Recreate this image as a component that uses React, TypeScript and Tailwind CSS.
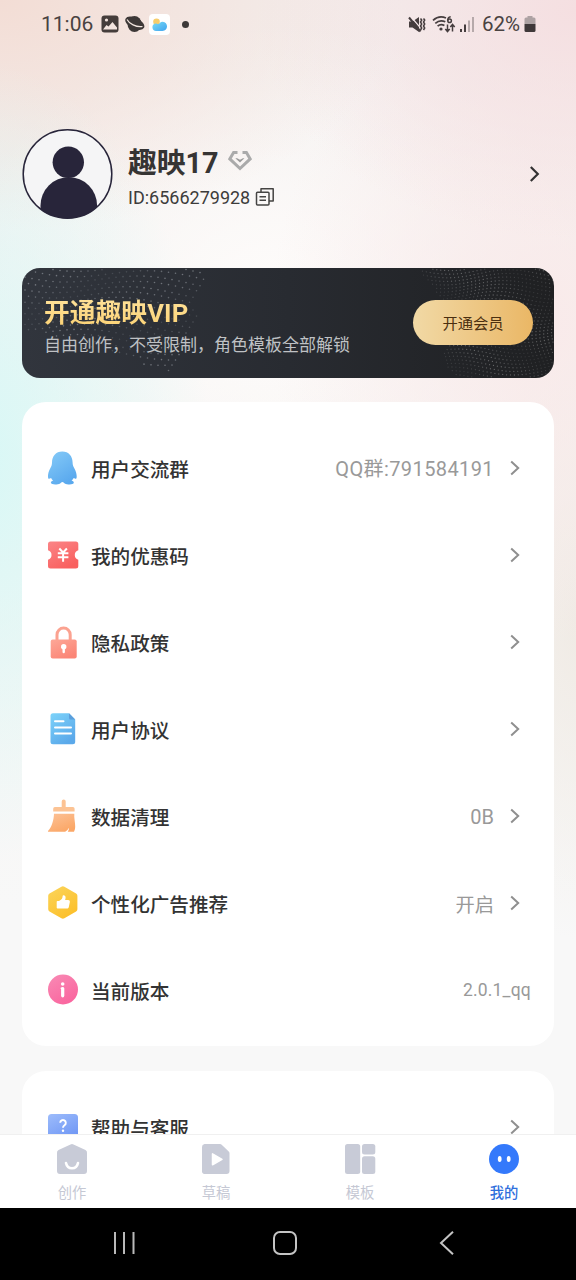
import type { ReactNode } from 'react';

type Row = {
  label: string;
  icon: ReactNode;
  value?: string;
  valueClass?: string;
  arrow?: boolean;
};

type Dot = { x: number; y: number; o: number };

// Loose wavy dots on the left side of the VIP banner
const leftDots: Dot[] = [];
for (let r = 0; r < 20; r++) {
  for (let c = 0; c < 27; c++) {
    const x = 3 + c * 7 + (r % 2) * 3.5;
    const y = -4 + r * 5.6 + Math.sin(c / 4 + r / 5) * 5 + c * 0.35;
    const edge = 184 - r * 1.5 + Math.sin(r) * 4;
    if (y < 1 || y > 108 || x > edge) continue;
    if (y > 62 && x < (y - 62) * 3.2 + 10) continue;
    if (y > 70 && x > 180 - (y - 70)) continue;
    leftDots.push({ x, y, o: 0.3 + 0.14 * Math.sin(c / 3 + r / 2) });
  }
}

// Tighter swirls on the right side
const rightDots: Dot[] = [];
for (let r = 0; r < 34; r++) {
  for (let c = 0; c < 38; c++) {
    const x = 398 + c * 3.9 + Math.sin(r / 4) * 5;
    const y = -5 + r * 3.6 + Math.sin(c / 5 + r / 9) * 4;
    if (y < 1 || y > 109 || x > 531) continue;
    if (y < 60 && x < 396 + y * 0.75) continue;
    if (y >= 60 && x < 427 + Math.sin(y / 8) * 5) continue;
    rightDots.push({ x, y, o: 0.26 + 0.12 * Math.sin(c / 4 - r / 3) });
  }
}

function Gradient({ id, from, to }: { id: string; from: string; to: string }) {
  return (
    <defs>
      <linearGradient id={id} x1="0" y1="0" x2="0.6" y2="1">
        <stop offset="0" stopColor={from} />
        <stop offset="1" stopColor={to} />
      </linearGradient>
    </defs>
  );
}

function RowIcon({ children }: { children: ReactNode }) {
  return (
    <svg width="32" height="36" viewBox="0 0 32 36" fill="none" className="shrink-0">
      {children}
    </svg>
  );
}

const PenguinIcon = (
  <RowIcon>
    <Gradient id="penguin" from="#86cbf8" to="#5aa9ee" />
    <path
      d="M15.300 .5C8.800 .5 5 5.400 5 11.500c0 2.400-.5 3.500-1.700 5.800C1.600 20.500 .8 23.500 1 26c.1 1.700.8 2.200 1.700 1.600.7-.5 1.300-.5 1.800 0 .4 1.100.9 1.300 1.600 2-1.600.6-2.400 1.500-2.200 2.500.4 1.700 6.300 2 9.200.4.900-.6 1.300-1.400 2.300-1.400s1.400.8 2.300 1.400c2.900 1.600 8.800 1.300 9.100-.4.2-1-.6-1.900-2.200-2.500.7-.7 1.200-.9 1.600-2 .5-.5 1-.5 1.700 0 .9.6 1.700.1 1.800-1.600.1-2.500-.7-5.500-2.400-8.700-1.200-2.300-1.700-3.400-1.700-5.800C25.600 5.400 21.800 .5 15.300 .5Z"
      fill="url(#penguin)"
    />
  </RowIcon>
);

const CouponIcon = (
  <RowIcon>
    <Gradient id="coupon" from="#fb8587" to="#f9605f" />
    <path
      d="M3.500 3.500h25.300a2.500 2.500 0 0 1 2.500 2.500v6.300a4.900 4.900 0 0 0 0 9.400V28a2.500 2.500 0 0 1-2.500 2.500H3.500A2.500 2.500 0 0 1 1 28v-6.300a4.900 4.900 0 0 0 0-9.400V6a2.500 2.500 0 0 1 2.500-2.500Z"
      fill="url(#coupon)"
    />
    <path d="M12.300 10.500l3.800 4 3.800-4M10.800 15.200h10.600M10.800 19.200h10.600M16.100 14.500v9.300" stroke="#fff" strokeWidth="2" />
  </RowIcon>
);

const LockIcon = (
  <RowIcon>
    <Gradient id="lock" from="#fda898" to="#fb8576" />
    <path d="M10 16V9.700a6.600 6.600 0 0 1 13.200 0V16" stroke="#fba290" strokeWidth="3" />
    <rect x="3.700" y="14.500" width="26" height="19" rx="2" fill="url(#lock)" />
    <circle cx="16.700" cy="21.700" r="2.700" fill="#fff" />
    <rect x="15.500" y="22" width="2.400" height="6.200" rx="1.200" fill="#fff" />
  </RowIcon>
);

const DocIcon = (
  <RowIcon>
    <Gradient id="doc" from="#7cd3fa" to="#5ba9ea" />
    <path d="M6 1.200h16l6.200 6.300v22.200a2.500 2.500 0 0 1-2.500 2.500H6a2.500 2.500 0 0 1-2.500-2.500v-26A2.500 2.500 0 0 1 6 1.200Z" fill="url(#doc)" />
    <path d="M22 1.200l6.200 6.300h-4.700A1.500 1.500 0 0 1 22 6Z" fill="#5b9fdc" />
    <path d="M8 9.300h8.500M8 15.500h16M8 21.500h16" stroke="#fff" strokeWidth="2" strokeLinecap="round" />
  </RowIcon>
);

const BroomIcon = (
  <RowIcon>
    <Gradient id="broom" from="#fcc297" to="#fba767" />
    <path d="M14.700 2.500a2 2 0 0 1 4 0V8h7.200a1.700 1.700 0 0 1 1.700 1.700v2.800H6.200V9.700A1.700 1.700 0 0 1 7.900 8h6.800Z" fill="#fcc394" />
    <path
      d="M7 14.800h20.300c-.4 4 .9 8.600 .9 12.500 0 2.600-.5 4-1.200 5.500h-6.200c.8-1.300 1.200-2.600 1.300-4-1.200 1.900-2.400 3.200-4 4H1.500c-.6 0-.7-.6-.3-1C4.800 28 6.700 21.500 7 14.800Z"
      fill="url(#broom)"
    />
  </RowIcon>
);

const HexIcon = (
  <RowIcon>
    <Gradient id="hex" from="#fbd55b" to="#fcc02c" />
    <path d="M14.400 .8a3 3 0 0 1 3 0l11.700 6.800a2.600 2.600 0 0 1 1.300 2.300v13.400a2.600 2.600 0 0 1-1.300 2.200l-11.700 6.800a3 3 0 0 1-3 0L2.500 25.500a2.600 2.600 0 0 1-1.300-2.200V9.900a2.600 2.600 0 0 1 1.300-2.300Z" fill="url(#hex)" />
    <path d="M10.500 15h2v7.500h-2a.8.8 0 0 1-.8-.8v-5.900a.8.8 0 0 1 .8-.8ZM12.300 14.800c2.700-1.200 3.200-2.700 3.300-4.500.1-1.700 2.900-1.200 3 1 0 1-.2 1.800-.5 2.700h3c1.300 0 2 .9 1.700 2.200l-1 4.700c-.3 1-.9 1.600-1.900 1.600h-7.600Z" fill="#fff" />
  </RowIcon>
);

const InfoIcon = (
  <RowIcon>
    <Gradient id="info" from="#f88bb5" to="#fa669f" />
    <circle cx="16" cy="16.500" r="15" fill="url(#info)" />
    <circle cx="15.700" cy="11" r="1.800" fill="#fff" />
    <path d="M14.300 15.300h1.400v7" stroke="#fff" strokeWidth="1.600" strokeLinecap="round" />
    <path d="M15.700 15.500v7.300" stroke="#fff" strokeWidth="3.200" strokeLinecap="round" />
  </RowIcon>
);

const HelpIcon = (
  <RowIcon>
    <Gradient id="help" from="#9dbcfb" to="#7198f5" />
    <rect x="1" y="4" width="30" height="26" rx="3.500" fill="url(#help)" />
    <path d="M13.200 12.800a2.800 2.800 0 1 1 4.300 2.400c-1 .7-1.500 1.100-1.500 2.600" stroke="#fff" strokeWidth="1.900" />
    <circle cx="16" cy="20.700" r="1.200" fill="#fff" />
  </RowIcon>
);

const rows: Row[] = [
  { label: '用户交流群', icon: PenguinIcon, value: 'QQ群:791584191', valueClass: 'pt-px text-[20px] tracking-[0.4px]', arrow: true },
  { label: '我的优惠码', icon: CouponIcon, arrow: true },
  { label: '隐私政策', icon: LockIcon, arrow: true },
  { label: '用户协议', icon: DocIcon, arrow: true },
  { label: '数据清理', icon: BroomIcon, value: '0B', valueClass: 'text-[20px]', arrow: true },
  { label: '个性化广告推荐', icon: HexIcon, value: '开启', valueClass: 'pt-[5px] text-[19.300px]', arrow: true },
  { label: '当前版本', icon: InfoIcon, value: '2.0.1_qq', valueClass: 'text-[17.500px] tracking-[0.2px]' },
];

function StatusBar() {
  return (
    <div className="flex h-12 shrink-0 items-center justify-between pl-[41px] pr-10 text-[#494241]">
      <div className="flex items-center">
        <span className="w-[60px] text-[21px] leading-none">11:06</span>
        <svg width="18" height="18" viewBox="0 0 18 18">
          <rect x=".5" y=".5" width="17" height="17" rx="3" fill="#453d3b" />
          <circle cx="5.500" cy="5" r="1.600" fill="#f3e4de" />
          <path d="M2 14.500l3.500-4.500 2 1.500 4-4.500 2 2.500 2.500 3v2Z" fill="#f3e4de" />
        </svg>
        <svg width="22" height="18" viewBox="0 0 22 18" className="ml-[5px]">
          <ellipse cx="10.500" cy="9" rx="7" ry="8" fill="#3d3837" />
          <ellipse cx="10.800" cy="8.300" rx="10.300" ry="5.500" transform="rotate(26 10.800 8.300)" fill="#3d3837" />
          <path d="M3 4.500C5 8.500 12 12.500 18.500 11.500" stroke="#f1e5df" strokeWidth="1.200" fill="none" />
        </svg>
        <span className="ml-[3px] flex size-[21px] items-center justify-center rounded bg-white">
          <svg width="17" height="15" viewBox="0 0 17 15">
            <defs>
              <linearGradient id="cloud" x1="0" y1="0" x2="1" y2="1">
                <stop offset="0" stopColor="#7bdcf5" />
                <stop offset="1" stopColor="#3fa4ef" />
              </linearGradient>
            </defs>
            <circle cx="5.500" cy="4.800" r="3.300" fill="#f7cd6b" />
            <path d="M5 14a3.800 3.800 0 0 1-.6-7.500c1.400-.2 2 1 3 .5 1.300-.7 1.800-2.300 4.300-2.300 5.600 0 6 9.300-.4 9.300Z" fill="url(#cloud)" />
          </svg>
        </span>
        <span className="ml-3 size-[7px] rounded-full bg-[#3d3938]" />
      </div>
      <div className="flex items-center">
        <svg width="18" height="17" viewBox="0 0 18 17">
          <path d="M1 5.500h3.500L11 1v15l-6.500-4.500H1Z" fill="#453d3e" />
          <path d="M2.500 .2l11 13" stroke="#f8e9ea" strokeWidth="1.300" />
          <path d="M1 1.500l11.500 14" stroke="#453d3e" strokeWidth="2" />
          <path d="M12.500 2.500l1.200 1.600-1.200 1.900 1.200 2-1.200 2 1.200 2-1.200 2M15.500 2.500l1.200 1.600-1.200 1.900 1.200 2-1.200 2 1.200 2-1.200 2" stroke="#453d3e" strokeWidth="1.500" fill="none" />
        </svg>
        <svg width="24" height="18" viewBox="0 0 24 18" className="ml-[6px]" fill="none" stroke="#453d3e">
          <path d="M1 5.300C5 1.700 10 1.200 14 3M3.300 8.300c3-2.700 6.500-3.200 10-1.500M5.600 11.200c2-1.800 4.500-2 6.800-.7" strokeWidth="1.700" />
          <circle cx="9" cy="14" r="1.600" fill="#453d3e" stroke="none" />
          <path d="M18.700 1.700c-2.200.3-3.100 2-3 4" strokeWidth="1.500" />
          <circle cx="17.600" cy="5.800" r="1.800" strokeWidth="1.500" />
          <path d="M15.500 9.500v6.500M13.300 14l2.200 2.500 2.200-2.500M20.500 16.500V10M18.300 12l2.200-2.500 2.200 2.500" strokeWidth="1.500" />
        </svg>
        <svg width="16" height="17" viewBox="0 0 16 17" className="ml-[3px]">
          <rect x="1" y="13" width="2" height="3" fill="#453d3e" />
          <rect x="5" y="8.500" width="2" height="7.500" fill="#453d3e" />
          <rect x="9" y="4.500" width="2" height="11.500" fill="#b6a9aa" />
          <rect x="13" y="1" width="2" height="15" fill="#b6a9aa" />
        </svg>
        <span className="ml-[7px] text-[20.500px] leading-none">62%</span>
        <svg width="12" height="18" viewBox="0 0 12 18" className="ml-1">
          <path d="M3.500 1h5v1.500H10A1.500 1.500 0 0 1 11.500 4v5H.5V4A1.500 1.500 0 0 1 2 2.500h1.500Z" fill="#ada2a3" />
          <path d="M.5 9h11v6.500A1.500 1.500 0 0 1 10 17H2a1.500 1.500 0 0 1-1.500-1.500Z" fill="#3f3839" />
        </svg>
      </div>
    </div>
  );
}

function Profile() {
  return (
    <div className="flex items-center pl-[22px] pr-8 pt-20">
      <svg width="91" height="92" viewBox="0 0 91 92" className="shrink-0">
        <clipPath id="avatar">
          <circle cx="45.500" cy="46" r="44.500" />
        </clipPath>
        <circle cx="45.500" cy="46" r="44.300" fill="#f5f5f6" />
        <g clipPath="url(#avatar)" fill="#28253a">
          <circle cx="46.300" cy="34.300" r="15.700" />
          <path d="M18.500 92V77.500a28.300 28.300 0 0 1 56.600 0V92Z" />
        </g>
        <circle cx="45.500" cy="46" r="44.300" fill="none" stroke="#28253a" strokeWidth="1.500" />
      </svg>
      <div className="ml-[15px] flex flex-1 flex-col pt-[7px]">
        <div className="flex items-center">
          <h1 className="text-[28.800px] font-bold leading-9 text-[#363433]">趣映17</h1>
          <svg width="26" height="22" viewBox="0 0 26 22" className="-mt-[5px] ml-2" fill="none">
            <path d="M10.500 2.500H6.600L2.800 8.900 13 18.500 23.200 8.900 19.400 2.500h-3.900" stroke="#aaa" strokeWidth="3" />
            <path d="M8.300 8.200h1.800L13 9.800l2.900-1.600h1.500L13 12.500Z" fill="#9b9b9b" />
          </svg>
        </div>
        <div className="flex items-center pt-[5px]">
          <span className="text-[18px] leading-6 text-[#3d3c3b]">ID:6566279928</span>
          <svg width="20" height="20" viewBox="0 0 20 20" className="-mt-[2px] ml-[5px]" fill="none" stroke="#454443" strokeWidth="1.500">
            <path d="M6 5V1.800h12.200V14H14" strokeLinejoin="round" />
            <rect x="1.500" y="5.300" width="12.500" height="12.700" rx="1" />
            <path d="M4.500 9.800h6.500M4.500 13.300h6.500" />
          </svg>
        </div>
      </div>
      <svg width="12" height="18" viewBox="0 0 12 18" fill="none" className="mr-[2px]">
        <path d="M.800 2l7 7-7 7" stroke="#333132" strokeWidth="2.200" />
      </svg>
    </div>
  );
}

function VipBanner() {
  return (
    <div className="relative mx-[22px] mt-12 flex h-[110px] shrink-0 items-center justify-between overflow-hidden rounded-[18px] bg-linear-to-r from-[#31353d] via-[#282b31] to-[#1f2022] pl-[22px] pr-[21px]">
      <svg className="absolute inset-0" width="532" height="110" viewBox="0 0 532 110">
        {leftDots.map((d, i) => (
          <circle key={i} cx={d.x} cy={d.y} r="0.8" fill="#c5cbd2" opacity={d.o} />
        ))}
        {rightDots.map((d, i) => (
          <circle key={i} cx={d.x} cy={d.y} r="0.65" fill="#d0d0d0" opacity={d.o} />
        ))}
      </svg>
      <div className="relative pt-2">
        <h2 className="bg-linear-to-b from-[#ffe39c] to-[#fbd070] bg-clip-text text-[25.700px] font-bold leading-9 tracking-[0.1px] text-transparent">
          开通趣映VIP
        </h2>
        <p className="text-[17px] leading-7 text-[#bfc1c4]">自由创作，不受限制，角色模板全部解锁</p>
      </div>
      <button className="relative mb-px h-[45px] w-[120px] rounded-full bg-linear-to-r from-[#f1d9a5] to-[#eab765] pt-[3px] text-[15.300px] text-[#4b2f10]">
        开通会员
      </button>
    </div>
  );
}

function MenuRow({ label, icon, value, valueClass, arrow }: Row) {
  return (
    <div className="flex h-[87px] items-center pl-[25px] pr-[23px]">
      {icon}
      <span className="ml-3 flex-1 pt-[5px] text-[19.600px] font-medium text-[#333]">{label}</span>
      {value && <span className={`text-[#999] ${valueClass}`}>{value}</span>}
      {arrow && (
        <svg width="11" height="16" viewBox="0 0 11 16" fill="none" className="mb-[2px] ml-[15px] mr-[11px] shrink-0">
          <path d="M2.200 1.500L9.200 8l-7 6.500" stroke="#8f8f8f" strokeWidth="2" />
        </svg>
      )}
    </div>
  );
}

function TabBar() {
  return (
    <div className="grid h-[74px] shrink-0 grid-cols-4 border-t border-[#f0f0f0] bg-white text-[14.300px] text-[#c5c8d4]">
      <div className="flex flex-col items-center pt-[7.500px]">
        <svg width="32" height="32" viewBox="0 0 32 32">
          <path d="M14.500 1.500a3 3 0 0 1 3 0l12 5.500A3 3 0 0 1 31 10v18a3 3 0 0 1-3 3H4a3 3 0 0 1-3-3V10a3 3 0 0 1 1.500-3Z" fill="#c8cbd7" />
          <path d="M10 20c1.500 7 10.500 7 12 0" stroke="#fff" strokeWidth="2.600" strokeLinecap="round" fill="none" />
        </svg>
        <span className="mt-2 leading-5">创作</span>
      </div>
      <div className="flex flex-col items-center pt-[7.500px]">
        <svg width="32" height="32" viewBox="0 0 32 32">
          <path d="M4.500 1H20q1 0 1.700.7l7 6.800q.8.8.8 1.800V28a3 3 0 0 1-3 3h-22A2.500 2.500 0 0 1 2 28V4a3 3 0 0 1 2.500-3Z" fill="#c8cbd7" />
          <path d="M12.500 10.800v11l9.500-5.500Z" fill="#fff" stroke="#fff" strokeWidth="1.500" strokeLinejoin="round" />
        </svg>
        <span className="mt-2 leading-5">草稿</span>
      </div>
      <div className="flex flex-col items-center pt-[7.500px]">
        <svg width="32" height="32" viewBox="0 0 32 32" fill="#c8cbd7">
          <rect x="1" y="1" width="15.200" height="30" rx="2.500" />
          <rect x="18" y="1" width="13.300" height="10.500" rx="2.500" />
          <rect x="18" y="13.300" width="13.300" height="17.700" rx="2.500" />
        </svg>
        <span className="mt-2 leading-5">模板</span>
      </div>
      <div className="flex flex-col items-center pt-[7.500px]">
        <svg width="32" height="32" viewBox="0 0 32 32">
          <circle cx="16" cy="16" r="15" fill="#3479fb" />
          <ellipse cx="11.700" cy="16" rx="1.900" ry="2.900" fill="#fff" />
          <ellipse cx="20.700" cy="16" rx="1.900" ry="2.900" fill="#fff" />
        </svg>
        <span className="mt-2 font-medium leading-5 text-[#2f6fdc]">我的</span>
      </div>
    </div>
  );
}

function SystemNav() {
  return (
    <div className="flex h-[72px] shrink-0 items-center bg-black pb-[2px] pl-[112px]">
      <svg width="24" height="24" viewBox="0 0 24 24" stroke="#b9b9b9" strokeWidth="2">
        <path d="M3 1v22M12 1v22M21.500 1v22" />
      </svg>
      <svg width="24" height="24" viewBox="0 0 24 24" fill="none" className="ml-[137px]">
        <rect x="1" y="1" width="22" height="22" rx="6" stroke="#c4c4c4" strokeWidth="2" />
      </svg>
      <svg width="16" height="24" viewBox="0 0 16 24" fill="none" className="ml-[142px]">
        <path d="M14 .8L2 12l12 11.200" stroke="#c4c4c4" strokeWidth="2" />
      </svg>
    </div>
  );
}

export default function App() {
  return (
    <div className="flex h-[1280px] w-[576px] flex-col overflow-hidden bg-[#f8f8f8] font-['Roboto','Noto_Sans_CJK_SC',sans-serif]">
      <div className="flex min-h-0 flex-1 flex-col overflow-hidden bg-[radial-gradient(ellipse_230px_400px_at_-20px_460px,#d8f8f6_0%,#d8f8f600_100%),radial-gradient(ellipse_400px_230px_at_0px_0px,#f3ddd5_0%,#f3ddd500_100%),radial-gradient(ellipse_320px_230px_at_576px_10px,#f5dfe1_0%,#f5dfe100_100%),radial-gradient(ellipse_270px_330px_at_540px_320px,#f9eaea_0%,#f9eaea00_100%),radial-gradient(ellipse_120px_320px_at_576px_620px,#f0ebe5_0%,#f0ebe500_100%),radial-gradient(ellipse_320px_280px_at_270px_300px,#fefcfb_0%,#fefcfb00_100%),linear-gradient(#f3efee,#f6f5f3_50%,#f8f8f8_80%)]">
        <StatusBar />
        <Profile />
        <VipBanner />
        <div className="mx-[22px] mt-6 shrink-0 rounded-3xl bg-white pb-3 pt-[23px]">
          {rows.map((row) => (
            <MenuRow key={row.label} {...row} />
          ))}
        </div>
        <div className="mx-[22px] mt-[25px] shrink-0 rounded-t-3xl bg-white pt-[13px]">
          <MenuRow label="帮助与客服" icon={HelpIcon} arrow />
        </div>
      </div>
      <TabBar />
      <SystemNav />
    </div>
  );
}
